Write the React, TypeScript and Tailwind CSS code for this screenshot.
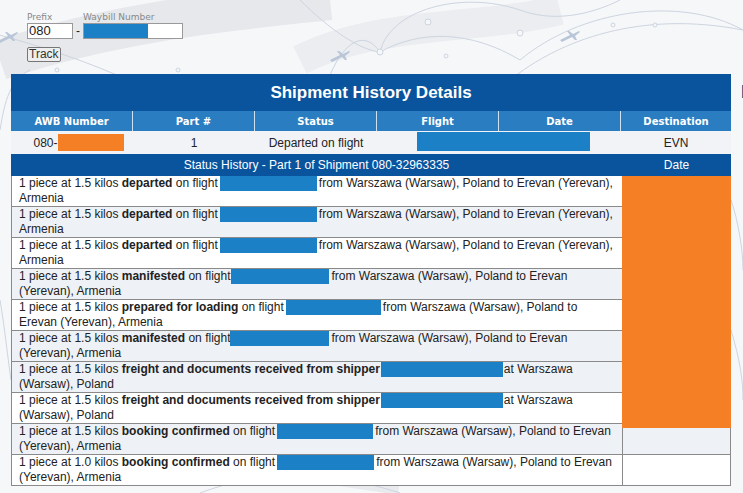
import React from 'react';

type Row = {
    kilos: string;
    action: string;
    mid: string;
    blue: number;
    ml: string;
    mr: string;
    rest: string;
    shade?: boolean;
};

const FROM = 'from Warszawa (Warsaw), Poland to Erevan (Yerevan), Armenia';

const rows: Row[] = [
    { kilos: '1.5', action: 'departed', mid: ' on flight', blue: 97, ml: 'ml-[2px]', mr: 'mr-[2px]', rest: FROM },
    { kilos: '1.5', action: 'departed', mid: ' on flight', blue: 97, ml: 'ml-[2px]', mr: 'mr-[2px]', rest: FROM, shade: true },
    { kilos: '1.5', action: 'departed', mid: ' on flight', blue: 97, ml: 'ml-[2px]', mr: 'mr-[2px]', rest: FROM },
    { kilos: '1.5', action: 'manifested', mid: ' on flight', blue: 98, ml: 'ml-[1px]', mr: 'mr-[2px]', rest: FROM, shade: true },
    { kilos: '1.5', action: 'prepared for loading', mid: ' on flight', blue: 95, ml: 'ml-[2px]', mr: 'mr-[2px]', rest: FROM },
    { kilos: '1.5', action: 'manifested', mid: ' on flight', blue: 99, ml: 'ml-0', mr: 'mr-[2px]', rest: FROM, shade: true },
    { kilos: '1.5', action: 'freight and documents received from shipper', mid: '', blue: 122, ml: 'ml-[1px]', mr: 'mr-[1px]', rest: 'at Warszawa (Warsaw), Poland', shade: true },
    { kilos: '1.5', action: 'freight and documents received from shipper', mid: '', blue: 122, ml: 'ml-[1px]', mr: 'mr-[1px]', rest: 'at Warszawa (Warsaw), Poland' },
    { kilos: '1.5', action: 'booking confirmed', mid: ' on flight', blue: 96, ml: 'ml-[2px]', mr: 'mr-[2px]', rest: FROM, shade: true },
    { kilos: '1.0', action: 'booking confirmed', mid: ' on flight', blue: 97, ml: 'ml-[2px]', mr: 'mr-[2px]', rest: FROM },
];

function Backdrop() {
    return (
        <svg className="absolute inset-0" width="743" height="493" viewBox="0 0 743 493" fill="none">
            <path d="M0 60 C120 20 240 10 330 0" stroke="#e6e8ec" strokeWidth="40" />
            <path d="M300 60 C380 20 480 30 560 10" stroke="#ebedf0" strokeWidth="30" />
            <path d="M20 470 C120 430 260 460 400 480" stroke="#e8eaee" strokeWidth="30" />
            <g stroke="#cdd5e0" strokeWidth="1">
                <path d="M-20 30 C100 60 180 100 250 150" />
                <path d="M300 0 C330 30 360 50 380 52" />
                <path d="M380 52 C390 10 460 -10 520 10 C560 25 600 10 620 0" />
                <path d="M380 52 C420 30 470 30 520 60" />
                <path d="M520 60 C580 10 680 -5 743 30" />
                <path d="M510 80 C560 40 640 10 743 30" />
                <path d="M330 75 C345 40 365 30 380 52" />
                <path d="M0 130 C5 100 10 80 30 70" />
                <path d="M731 200 C738 220 743 250 743 270" />
                <path d="M731 330 C740 360 743 380 743 400" />
                <path d="M0 300 C5 330 8 360 11 380" />
                <path d="M200 493 C260 470 330 470 400 493" />
            </g>
            <g stroke="#cdd5e0" strokeWidth="1" fill="#f6f7f9">
                <circle cx="380" cy="52" r="3" />
                <circle cx="520" cy="33" r="3" />
                <circle cx="428" cy="22" r="3" />
                <circle cx="57" cy="70" r="2" />
                <circle cx="178" cy="70" r="2" />
                <circle cx="613" cy="25" r="2" />
                <circle cx="655" cy="25" r="2" />
                <circle cx="446" cy="56" r="2" />
            </g>
            <g fill="#b9c6d7">
                <path d="M560 40 l10 -5 l-3 -4 l2 0 l4 3 l6 -3 l1 1 l-5 4 l2 4 l-2 0 l-3 -3 l-10 5 z" />
                <path d="M330 60 l10 -5 l-3 -4 l2 0 l4 3 l6 -3 l1 1 l-5 4 l2 4 l-2 0 l-3 -3 l-10 5 z" />
                <path d="M0 40 l8 -4 l-3 -4 l2 0 l4 3 l6 -3 l1 1 l-5 4 l2 4 l-2 0 l-3 -3 l-10 5 z" />
            </g>
        </svg>
    );
}

export default function App() {
    return (
        <div className="relative w-[743px] h-[493px] overflow-hidden bg-[#f6f7f9] font-['Liberation_Sans',Arial,sans-serif] text-[#222]">
            <Backdrop />
            <div className="relative">
                <div className="pl-[27px] pt-[12px] flex items-end">
                    <div className="flex flex-col">
                        <span className="text-[9px] leading-[11px] text-[#888] font-['DejaVu_Sans',sans-serif]">Prefix</span>
                        <div className="w-[46px] h-[16px] border border-[#999] bg-white text-[13px] leading-[14px] pl-[1px]">080</div>
                    </div>
                    <span className="w-[10px] text-center text-[12px] leading-[16px]">-</span>
                    <div className="flex flex-col">
                        <span className="text-[9px] leading-[11px] text-[#888] font-['DejaVu_Sans',sans-serif]">Waybill Number</span>
                        <div className="w-[100px] h-[16px] border border-[#999] bg-white">
                            <div className="w-[64px] h-full bg-[#1b80c6]" />
                        </div>
                    </div>
                </div>
                <div className="pl-[27px] pt-[8px] flex">
                    <button className="h-[15px] px-[1px] border border-[#777] rounded-[2px] bg-[#eeeeee] text-[12px] leading-[13px] text-[#333]">Track</button>
                </div>

                <div className="flex mt-[12px]">
                    <div className="ml-[11px] w-[720px] shrink-0">
                        <div className="h-[37px] bg-[#0a549e] text-white text-[17px] font-bold flex items-center justify-center">
                            Shipment History Details
                        </div>
                        <div className="h-[20px] bg-[#2a7dc0] flex text-white text-[10px] font-bold font-['DejaVu_Sans',sans-serif]">
                            {['AWB Number', 'Part #', 'Status', 'Flight', 'Date'].map((h) => (
                                <div key={h} className="w-[122px] border-r border-[#cfe0f0] flex items-center justify-center">{h}</div>
                            ))}
                            <div className="flex-1 flex items-center justify-center">Destination</div>
                        </div>
                        <div className="relative h-[23px] bg-[#f1f3f7] flex text-[12px]">
                            <div className="w-[122px] flex items-center justify-center pl-[13px]">
                                080-<span className="inline-block w-[66px] h-[17px] bg-[#f47f24]" />
                            </div>
                            <div className="w-[122px] flex items-center justify-center">1</div>
                            <div className="w-[122px] flex items-center justify-center">Departed on flight</div>
                            <div className="w-[244px]" />
                            <div className="flex-1 flex items-center justify-center">EVN</div>
                            <div className="absolute left-[406px] top-[1px] w-[173px] h-[19px] bg-[#1b80c6]" />
                        </div>
                        <div className="h-[22px] bg-[#0a549e] flex text-white text-[12px]">
                            <div className="w-[611px] flex items-center justify-center">Status History - Part 1 of Shipment 080-32963335</div>
                            <div className="flex-1 flex items-center justify-center">Date</div>
                        </div>
                        <div className="relative">
                            {rows.map((r, i) => (
                                <div key={i} className={`flex border-b border-[#8a8a8a] ${r.shade ? 'bg-[#eef1f6]' : 'bg-white'}`}>
                                    <div className="w-[611px] h-[30px] overflow-hidden border-l border-[#8a8a8a] pl-[7px] pr-[5px] text-[12px] leading-[15px]">
                                        1 piece at {r.kilos} kilos <b>{r.action}</b>{r.mid}
                                        <span className={`inline-block align-top h-[15px] bg-[#1b80c6] ${r.ml} ${r.mr}`} style={{ width: r.blue }} />
                                        {r.rest}
                                    </div>
                                    <div className="flex-1 h-[30px] border-l border-r border-[#8a8a8a]" />
                                </div>
                            ))}
                            <div className="absolute left-[611px] top-0 w-[109px] h-[252px] bg-[#f47f24]" />
                        </div>
                    </div>
                    <div className="ml-[10px] mt-[9px] shrink-0 text-[18px] font-bold text-[#0b3d7a] leading-[18px]">P</div>
                </div>
            </div>
        </div>
    );
}
